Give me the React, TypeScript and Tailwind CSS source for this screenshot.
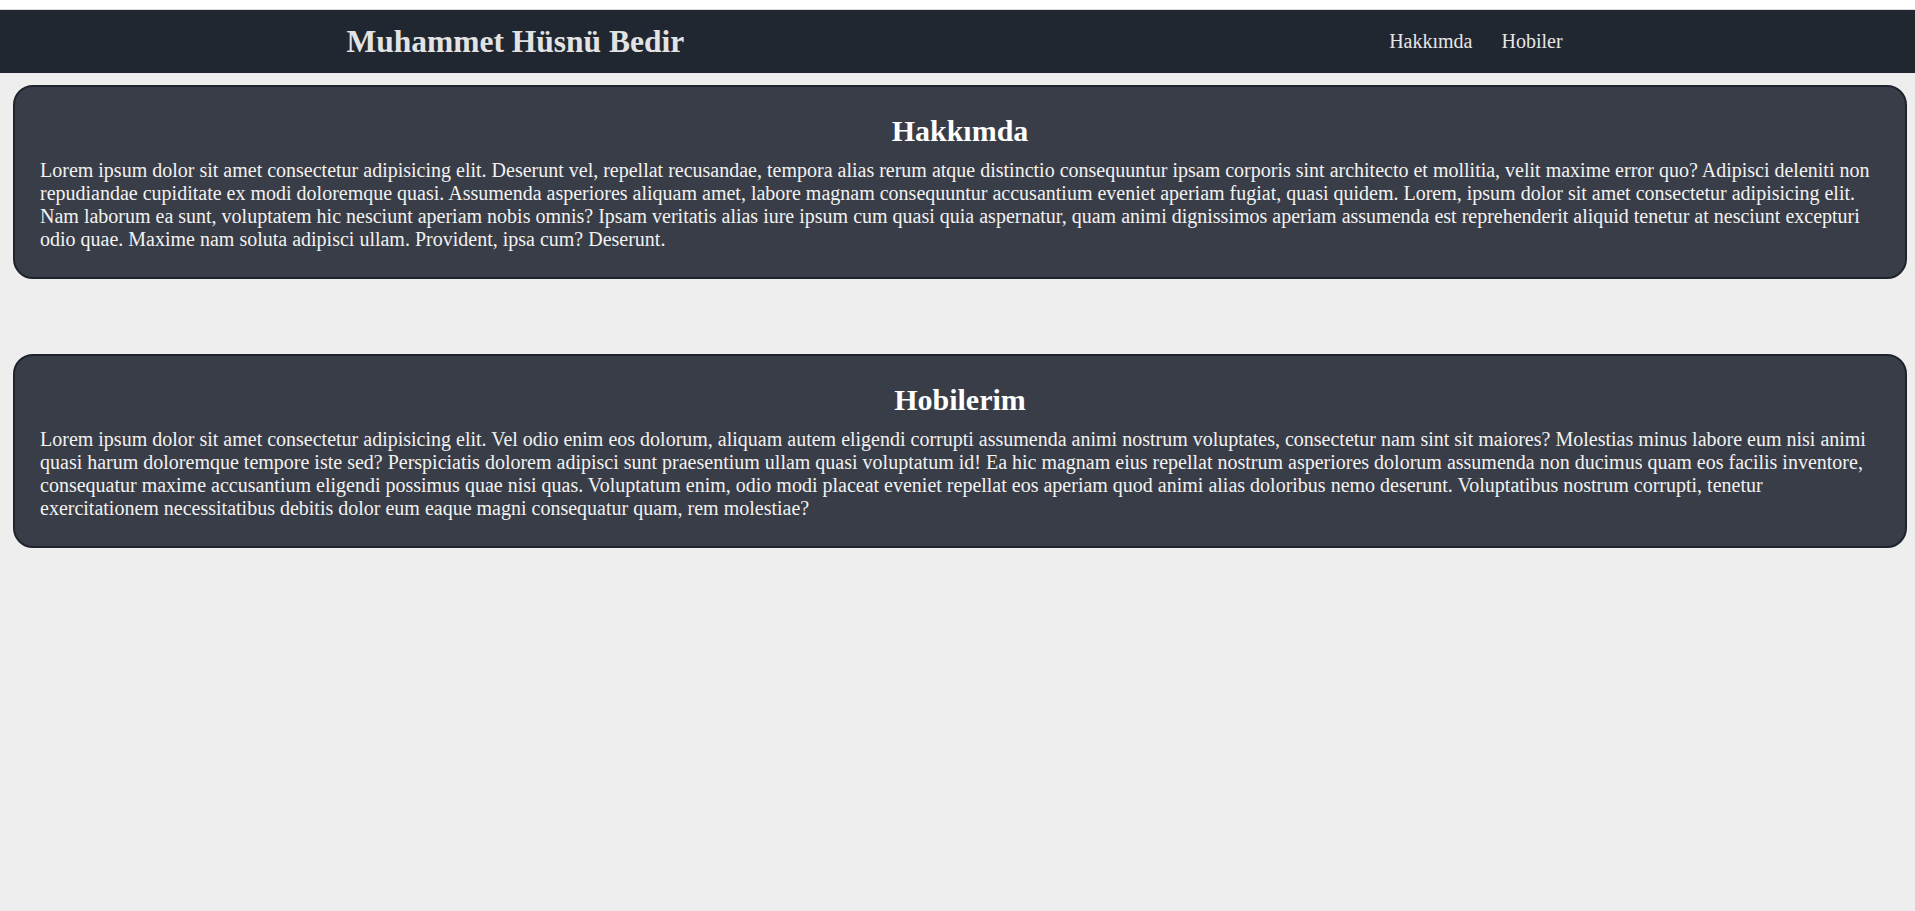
import React from "react";

const serif = { fontFamily: '"Liberation Serif", "Times New Roman", serif' };

const cards = [
  {
    title: "Hakkımda",
    text: "Lorem ipsum dolor sit amet consectetur adipisicing elit. Deserunt vel, repellat recusandae, tempora alias rerum atque distinctio consequuntur ipsam corporis sint architecto et mollitia, velit maxime error quo? Adipisci deleniti non repudiandae cupiditate ex modi doloremque quasi. Assumenda asperiores aliquam amet, labore magnam consequuntur accusantium eveniet aperiam fugiat, quasi quidem. Lorem, ipsum dolor sit amet consectetur adipisicing elit. Nam laborum ea sunt, voluptatem hic nesciunt aperiam nobis omnis? Ipsam veritatis alias iure ipsum cum quasi quia aspernatur, quam animi dignissimos aperiam assumenda est reprehenderit aliquid tenetur at nesciunt excepturi odio quae. Maxime nam soluta adipisci ullam. Provident, ipsa cum? Deserunt.",
  },
  {
    title: "Hobilerim",
    text: "Lorem ipsum dolor sit amet consectetur adipisicing elit. Vel odio enim eos dolorum, aliquam autem eligendi corrupti assumenda animi nostrum voluptates, consectetur nam sint sit maiores? Molestias minus labore eum nisi animi quasi harum doloremque tempore iste sed? Perspiciatis dolorem adipisci sunt praesentium ullam quasi voluptatum id! Ea hic magnam eius repellat nostrum asperiores dolorum assumenda non ducimus quam eos facilis inventore, consequatur maxime accusantium eligendi possimus quae nisi quas. Voluptatum enim, odio modi placeat eveniet repellat eos aperiam quod animi alias doloribus nemo deserunt. Voluptatibus nostrum corrupti, tenetur exercitationem necessitatibus debitis dolor eum eaque magni consequatur quam, rem molestiae?",
  },
];

export default function App() {
  return (
    <div className="min-h-screen bg-[#eeeeee]" style={serif}>
      <div className="h-[9px] bg-white border-b border-[#d9dbde] box-content" />
      <header className="h-[63px] bg-[#212731] flex items-center justify-around">
        <h1 className="text-[31.5px] font-bold text-[#e3e3e3] leading-none -ml-[6px]">Muhammet Hüsnü Bedir</h1>
        <nav className="flex items-center gap-[29px] text-[20px] leading-[23px] text-[#e6e6e6]">
          <a href="#hakkimda">Hakkımda</a>
          <a href="#hobiler">Hobiler</a>
        </nav>
      </header>
      <main className="pl-[13px] pr-[8px] pt-[12px] flex flex-col gap-[75px]">
        {cards.map((c) => (
          <section
            key={c.title}
            className="bg-[#393d47] border-2 border-[#1f242c] rounded-[20px] px-[25px] pt-[27px] pb-[26px]"
          >
            <h2 className="text-[30px] leading-[34px] font-bold text-white text-center mb-[11px]">{c.title}</h2>
            <p className="text-[20px] leading-[23px] text-[#f2f2f2]">{c.text}</p>
          </section>
        ))}
      </main>
    </div>
  );
}
